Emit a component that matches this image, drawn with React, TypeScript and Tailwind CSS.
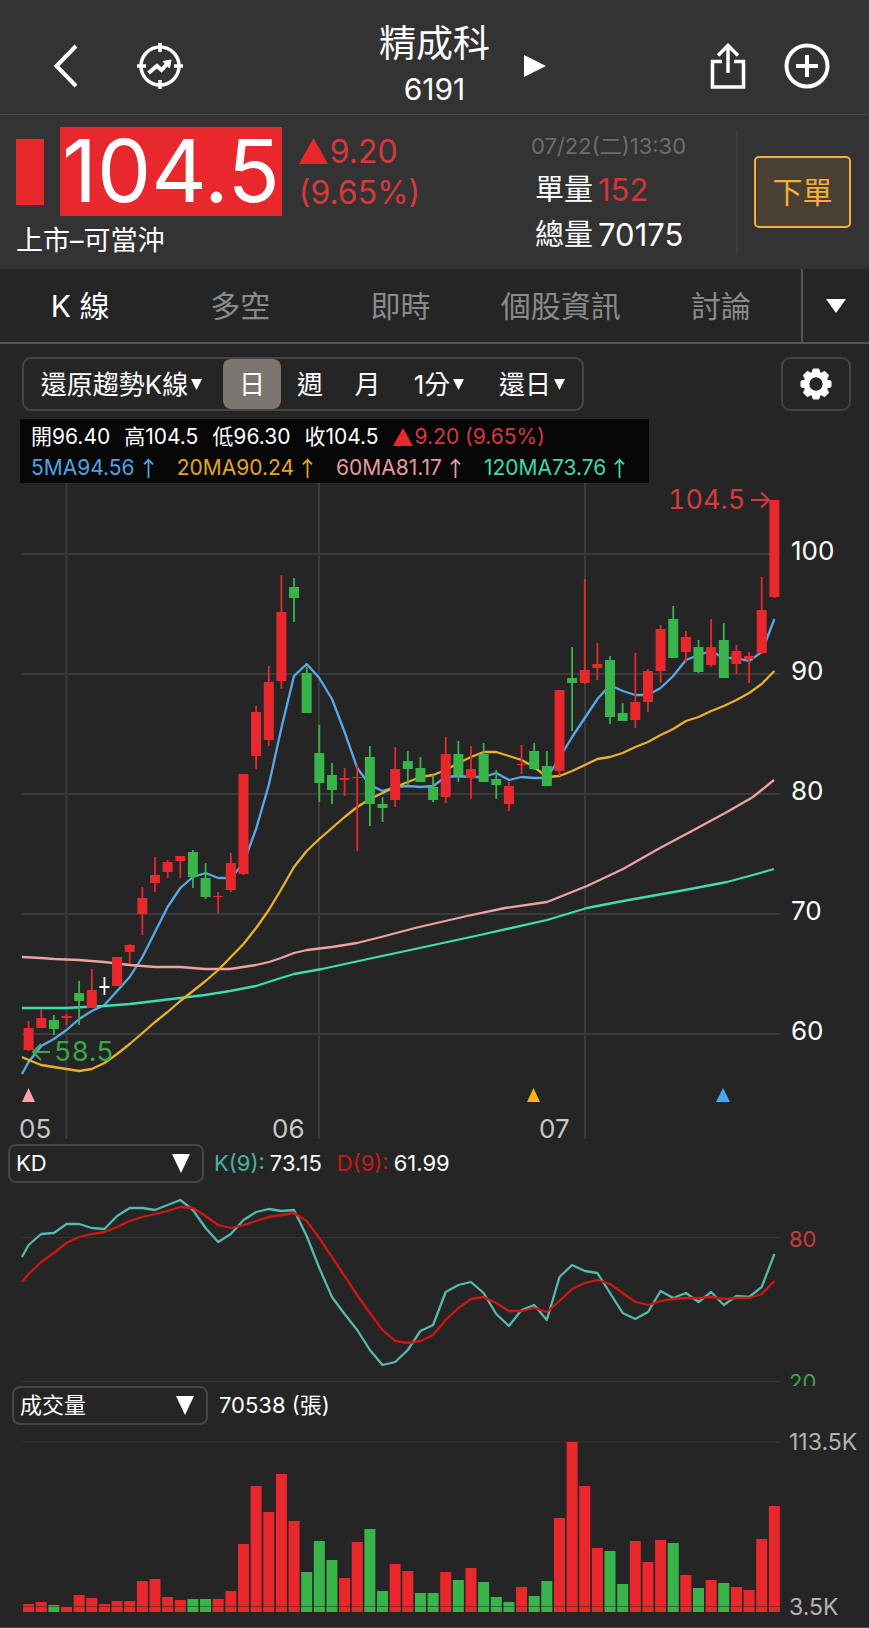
import clsx from "clsx";
import { PropsWithChildren } from "react";

type Tone = "r" | "g" | "w";
type Candle = [high: number, top: number, bottom: number, low: number, tone: Tone];

const COLORS = {
  r: "#e9282d",
  g: "#39b44a",
  w: "#ffffff",
};

// chart geometry, shared by the three panels
const LEFT = 22;
const RIGHT = 780;
const FIRST = 28.6;
const STEP = 12.64;

const CANDLES: Candle[] = [
  [1021, 1028, 1050, 1051, "r"],
  [1009, 1018, 1028, 1028, "r"],
  [1015, 1020, 1029, 1035, "g"],
  [1014, 1016, 1018, 1025, "r"],
  [981, 993, 1001, 1025, "g"],
  [969, 990, 1008, 1008, "r"],
  [977, 986, 988, 995, "w"],
  [957, 957, 986, 986, "r"],
  [944, 945, 952, 964, "r"],
  [887, 898, 914, 935, "r"],
  [857, 875, 883, 892, "r"],
  [860, 862, 872, 878, "r"],
  [856, 856, 861, 878, "r"],
  [850, 852, 877, 888, "g"],
  [863, 878, 897, 899, "g"],
  [892, 896, 897, 913, "r"],
  [853, 863, 890, 892, "r"],
  [774, 774, 874, 875, "r"],
  [706, 712, 756, 769, "r"],
  [666, 682, 740, 746, "r"],
  [575, 612, 681, 689, "r"],
  [578, 587, 598, 622, "g"],
  [667, 673, 713, 713, "g"],
  [725, 753, 783, 802, "g"],
  [763, 775, 790, 804, "g"],
  [768, 778, 780, 796, "r"],
  [765, 777, 778, 851, "r"],
  [746, 757, 804, 826, "g"],
  [797, 804, 808, 822, "g"],
  [747, 769, 800, 807, "r"],
  [751, 761, 769, 786, "g"],
  [757, 768, 782, 782, "g"],
  [775, 787, 800, 802, "g"],
  [737, 754, 797, 803, "r"],
  [741, 754, 775, 782, "g"],
  [746, 769, 778, 799, "r"],
  [743, 754, 782, 782, "g"],
  [770, 779, 785, 799, "g"],
  [782, 786, 804, 811, "r"],
  [745, 764, 765, 774, "r"],
  [743, 751, 769, 770, "g"],
  [751, 766, 786, 786, "g"],
  [690, 690, 771, 776, "r"],
  [647, 678, 683, 731, "g"],
  [579, 670, 683, 684, "r"],
  [643, 664, 668, 680, "r"],
  [656, 660, 717, 724, "g"],
  [703, 713, 721, 721, "g"],
  [653, 702, 720, 728, "r"],
  [669, 671, 702, 712, "r"],
  [625, 629, 671, 683, "r"],
  [606, 619, 658, 658, "g"],
  [631, 637, 652, 662, "r"],
  [640, 647, 672, 673, "g"],
  [619, 647, 665, 667, "r"],
  [623, 640, 678, 678, "g"],
  [645, 651, 664, 674, "r"],
  [652, 656, 659, 683, "r"],
  [577, 610, 653, 654, "r"],
  [500, 500, 597, 598, "r"],
];

// one value at the left edge, then one per candle
const MA5 = [
  1074, 1062, 1046, 1039, 1030, 1019, 1011, 1005, 991, 977, 957, 932, 907, 888, 877, 873, 878, 878, 863, 829, 785,
  728, 676, 664, 678, 699, 732, 768, 785, 791, 787, 786, 787, 786, 777, 776, 777, 777, 773, 780, 777, 778, 778, 758,
  737, 718, 699, 685, 691, 695, 695, 688, 676, 660, 655, 651, 658, 658, 661, 652, 619,
];
const MA20 = [
  1057, 1060, 1065, 1067, 1069, 1071, 1069, 1063, 1054, 1044, 1033, 1022, 1012, 1001, 991, 981, 970, 957, 944, 928,
  910, 889, 867, 851, 839, 828, 817, 807, 799, 793, 787, 782, 777, 775, 770, 763, 757, 752, 752, 756, 760, 767, 777,
  776, 771, 765, 759, 757, 753, 747, 742, 735, 729, 721, 717, 711, 706, 700, 693, 684, 671,
];
const MA60 =
  "22,957 41,958 54,959 79,960 104,962 130,965 155,967 180,967 205,969 230,969 243,967 256,965 269,962 281,958 294,953 307,950 332,947 357,943 385,936 415,928 467,916 505,908 547,902 587,886 623,869 660,848 690,832 727,812 753,797 774,780";
const MA120 =
  "22,1008 66,1008 104,1006 130,1004 155,1001 180,998 205,995 230,991 256,986 281,978 294,974 322,969 368,959 415,949 480,935 547,920 587,908 623,901 685,890 727,882 753,875 774,869";

const K_LINE = [
  1257, 1245, 1234, 1233, 1224, 1224, 1228, 1229, 1216, 1208, 1208, 1210, 1205, 1200, 1210, 1228, 1242, 1234, 1220,
  1212, 1209, 1211, 1210, 1236, 1268, 1297, 1314, 1330, 1350, 1365, 1362, 1350, 1331, 1325, 1292, 1285, 1282, 1293,
  1314, 1326, 1310, 1305, 1320, 1277, 1265, 1271, 1273, 1293, 1313, 1319, 1312, 1291, 1298, 1293, 1302, 1292, 1305,
  1296, 1297, 1287, 1254,
];
const D_LINE = [
  1282, 1274, 1262, 1253, 1243, 1237, 1234, 1232, 1227, 1221, 1217, 1214, 1211, 1207, 1208, 1216, 1225, 1228, 1225,
  1221, 1217, 1215, 1213, 1221, 1238, 1257, 1276, 1295, 1313, 1330, 1341, 1343, 1341, 1335, 1320, 1308, 1299, 1297,
  1303, 1311, 1311, 1308, 1312, 1301, 1289, 1283, 1280, 1284, 1293, 1302, 1305, 1301, 1299, 1298, 1298, 1297, 1299,
  1298, 1298, 1294, 1281,
];

const VOLUMES = [
  8, 10, 7, 5, 17, 14, 8, 11, 11, 31, 33, 15, 12, 13, 13, 13, 21, 68, 126, 100, 138, 91, 40, 71, 52, 34, 70, 83, 21,
  48, 41, 19, 19, 40, 32, 44, 30, 15, 10, 25, 16, 31, 94, 170, 126, 64, 61, 28, 71, 50, 72, 69, 37, 24, 32, 29, 25,
  22, 73, 106,
];
const VOLUME_TONES = "rrgrrrrrrrrrrggrrrrrrrgggrrggrrggrgrggg" + "rggrrrrggrrrgrgrgrrrr";

const candleX = (i: number) => FIRST + i * STEP;

const toPoints = (ys: number[]) =>
  ys.map((y, i) => `${i === 0 ? LEFT : candleX(i - 1).toFixed(1)},${y}`).join(" ");

const Triangle = ({ className, dir = "down" }: { className?: string; dir?: "down" | "up" | "right" }) => (
  <svg viewBox="0 0 20 20" preserveAspectRatio="none" className={clsx("shrink-0 fill-current", className)} aria-hidden>
    {dir === "down" && <path d="M0 0H20L10 20Z" />}
    {dir === "up" && <path d="M10 0L20 20H0Z" />}
    {dir === "right" && <path d="M0 0L20 10L0 20Z" />}
  </svg>
);

const Header = () => (
  <header className="grid grid-cols-[1fr_auto_1fr] items-center border-b border-[#4a4a4a] bg-[#333333] pt-[21px] pb-[3px]">
    <div className="flex items-center gap-[59px] pl-[53px]">
      <button type="button" aria-label="返回">
        <svg viewBox="0 0 25 44" className="h-[44px] w-[25px] fill-none stroke-white stroke-[4]">
          <path d="M23 2L3.500 22L23 42" />
        </svg>
      </button>
      <button type="button" aria-label="選股">
        <svg viewBox="0 0 46 46" className="h-[46px] w-[46px] fill-none stroke-white">
          <circle cx="23" cy="23" r="19" strokeWidth="3.500" />
          <path d="M23 0V9M23 37V46M0 23H9M37 23H46" strokeWidth="3.500" />
          <path d="M11.500 30L20 23L24.500 27L31 20" strokeWidth="4" />
          <path d="M34 17L26 18.500L32.500 25Z" className="fill-white" strokeWidth="1" />
        </svg>
      </button>
    </div>
    <div className="text-center">
      <h1 className="text-[37px] leading-[46px]">精成科</h1>
      <p className="text-[30px] leading-[44px]">6191</p>
    </div>
    <div className="flex items-center justify-between pr-[39px] pl-[34px]">
      <button type="button" aria-label="下一檔">
        <Triangle dir="right" className="h-[22px] w-[22px]" />
      </button>
      <div className="flex items-center gap-[38px]">
        <button type="button" aria-label="分享">
          <svg viewBox="0 0 36 46" className="h-[46px] w-[36px] fill-none stroke-white stroke-[3.500]">
            <path d="M12 18.500H2.500V44H33.500V18.500H24" />
            <path d="M18 30V3M8 12.500L18 2.500L28 12.500" />
          </svg>
        </button>
        <button type="button" aria-label="加入自選">
          <svg viewBox="0 0 46 46" className="h-[46px] w-[46px] fill-none stroke-white stroke-[4]">
            <circle cx="23" cy="23" r="20.500" />
            <path d="M23 12V34M12 23H34" />
          </svg>
        </button>
      </div>
    </div>
  </header>
);

const Quote = () => (
  <section className="flex justify-between bg-[#333333] pt-3 pr-[18px] pb-[10px] pl-4">
    <div>
      <div className="flex items-center">
        <span className="h-[66px] w-[28px] bg-[#e9282d]" />
        <strong className="ml-4 bg-[#e9282d] px-[2px] text-[86px] leading-[89px] font-normal">104.5</strong>
        <div className="ml-[17px] text-[32px] leading-[41px] text-[#d63a3c]">
          <p className="flex items-center">
            <Triangle dir="up" className="mr-0.5 h-[26px] w-[29px] text-[#e9282d]" />
            9.20
          </p>
          <p>(9.65%)</p>
        </div>
      </div>
      <p className="mt-[7px] text-[27px] leading-[36px]">上市–可當沖</p>
    </div>
    <div className="flex">
      <div className="w-[206px]">
        <p className="pb-0.5 pl-px text-[22px] leading-[38px] text-[#6d6d6d]">07/22(二)13:30</p>
        <p className="flex items-center gap-[5px] pl-[5px] text-[29px] leading-[45px]">
          單量<span className="text-[31px] text-[#d9333a]">152</span>
        </p>
        <p className="flex items-center gap-[5px] pl-[5px] text-[29px] leading-[45px]">
          總量<span className="text-[31px]">70175</span>
        </p>
      </div>
      <span className="my-1 w-[2px] bg-[#3d3d3d]" />
      <button
        type="button"
        className="mt-[29px] ml-4 h-[72px] w-[97px] rounded-[5px] border-2 border-[#f2ae3f] bg-[#493f33] text-[30px] text-[#f6ae3b]"
      >
        下單
      </button>
    </div>
  </section>
);

const TABS = ["K 線", "多空", "即時", "個股資訊", "討論"];

const Tabs = () => (
  <nav className="flex h-[75px] border-b-2 border-[#545454]">
    {TABS.map((tab, i) => (
      <button
        key={tab}
        type="button"
        className={clsx("flex-1 pt-0.5 text-[30px] whitespace-nowrap", i === 0 ? "text-white" : "text-[#8b8b8b]")}
      >
        {tab}
      </button>
    ))}
    <button
      type="button"
      aria-label="更多"
      className="flex w-[68px] items-center justify-center border-l-2 border-[#545454]"
    >
      <Triangle className="h-[14px] w-[20px]" />
    </button>
  </nav>
);

const PeriodButton = ({ className, children, menu }: PropsWithChildren<{ className?: string; menu?: boolean }>) => (
  <button type="button" className={clsx("flex h-full items-center justify-center whitespace-nowrap", className)}>
    {children}
    {menu && <Triangle className="ml-[3px] h-[11px] w-[11px]" />}
  </button>
);

const Toolbar = () => (
  <div className="flex items-center justify-between pt-[13px] pr-[18px] pb-2 pl-[22px]">
    <div className="flex h-[54px] items-center rounded-[9px] border-2 border-[#454545] text-[26px]">
      <PeriodButton menu className="w-[199px] pr-1">
        還原趨勢K線
      </PeriodButton>
      <PeriodButton className="my-[-2px] h-[54px] w-[58px] rounded-[8px] bg-[#7d7670]">日</PeriodButton>
      <PeriodButton className="w-[58px]">週</PeriodButton>
      <PeriodButton className="w-[57px]">月</PeriodButton>
      <PeriodButton menu className="w-[86px]">
        1分
      </PeriodButton>
      <PeriodButton menu className="w-[100px]">
        還日
      </PeriodButton>
    </div>
    <button
      type="button"
      aria-label="設定"
      className="flex h-[54px] w-[70px] items-center justify-center rounded-[9px] border-2 border-[#454545]"
    >
      <svg viewBox="0 0 32 32" className="h-[32px] w-[32px]">
        {[0, 45, 90, 135, 180, 225, 270, 315].map((angle) => (
          <path
            key={angle}
            d="M12.500 1.500Q12.800 .5 14 .5H18Q19.200 .5 19.500 1.500L20.800 6H11.200Z"
            fill="#fff"
            transform={`rotate(${angle} 16 16)`}
          />
        ))}
        <circle cx="16" cy="16" r="9.400" fill="none" stroke="#fff" strokeWidth="5.500" />
      </svg>
    </button>
  </div>
);

const UpArrow = () => (
  <svg viewBox="0 0 12 22" className="ml-2 h-[20px] w-[11px] fill-none stroke-current stroke-[2]" aria-hidden>
    <path d="M6 22V2M1 7L6 2L11 7" />
  </svg>
);

const AVERAGES = [
  { text: "5MA94.56", className: "text-[#4fa3e3]" },
  { text: "20MA90.24", className: "text-[#e2a521]" },
  { text: "60MA81.17", className: "text-[#e79a9c]" },
  { text: "120MA73.76", className: "text-[#41d9ac]" },
];

const Legend = () => (
  <div className="absolute top-0 left-[20px] w-[629px] bg-[#060606] px-[11px] text-[21px] leading-[32px] whitespace-nowrap">
    <p className="flex gap-[14px] pt-0.5">
      <span>開96.40</span>
      <span>高104.5</span>
      <span>低96.30</span>
      <span>收104.5</span>
      <span className="flex items-center text-[#d63a3c]">
        <Triangle dir="up" className="mr-0.5 h-[18px] w-[20px] text-[#e9282d]" />
        9.20 (9.65%)
      </span>
    </p>
    <p className="flex gap-[23px] leading-[30px]">
      {AVERAGES.map(({ text, className }) => (
        <span key={text} className={clsx("flex items-center", className)}>
          {text}
          <UpArrow />
        </span>
      ))}
    </p>
  </div>
);

const PriceChart = () => (
  <div className="relative">
    <Legend />
    <svg viewBox="0 419 869 725" className="block w-full" role="img" aria-label="日K線圖">
      <g stroke="#3b3b3b" strokeWidth="2">
        {[554, 674, 794, 914, 1034].map((y) => (
          <line key={y} x1={LEFT} x2={RIGHT} y1={y} y2={y} />
        ))}
        {[66.5, 319, 585].map((x) => (
          <line key={x} x1={x} x2={x} y1="445" y2="1139" />
        ))}
      </g>
      <g fill="none" strokeWidth="2.300" strokeLinejoin="round">
        <polyline points={toPoints(MA5)} stroke="#58a9ea" />
        <polyline points={MA60} stroke="#eda3a2" />
        <polyline points={MA120} stroke="#3fdcb0" />
        <polyline points={toPoints(MA20)} stroke="#e9b02c" />
      </g>
      {CANDLES.map(([high, top, bottom, low, tone], i) => (
        <g key={i} fill={COLORS[tone]}>
          <rect x={candleX(i) - 0.9} y={high} width="1.800" height={low - high} />
          <rect x={candleX(i) - 5} y={top} width="10" height={bottom - top} />
        </g>
      ))}
      <g fill="none" strokeWidth="2">
        <path d="M751 500H769M761 492.500L769 500L761 507.500" stroke="#d63a3c" />
        <path d="M50 1052H33M41 1044L33 1052L41 1060" stroke="#39a845" />
      </g>
      <g className="text-[27px] tabular-nums">
        <text x="668" y="509" fill="#d63a3c">
          104.5
        </text>
        <text x="54" y="1061" fill="#39a845">
          58.5
        </text>
      </g>
      <path d="M28.500 1088L35 1102H22Z" fill="#f8a5a3" />
      <path d="M533.500 1088L540 1102H527Z" fill="#f9b316" />
      <path d="M723 1088L730 1102H716Z" fill="#4ba5f5" />
      <g fill="#ffffff" className="text-[26px]">
        {[100, 90, 80, 70, 60].map((price, i) => (
          <text key={price} x="791" y={560 + i * 120}>
            {price}
          </text>
        ))}
      </g>
      <g fill="#c9c9c9" className="text-[26px]">
        <text x="19" y="1138">
          05
        </text>
        <text x="272" y="1138">
          06
        </text>
        <text x="539" y="1138">
          07
        </text>
      </g>
    </svg>
  </div>
);

type IndicatorSelectProps = {
  label: string;
  value: string;
  options: string[];
};

const IndicatorSelect = ({ label, value, options }: IndicatorSelectProps) => (
  <label className="relative block w-[196px]">
    <span className="sr-only">{label}</span>
    <select
      defaultValue={value}
      className="block h-[39px] w-full appearance-none rounded-[8px] border-2 border-[#454545] bg-[#252525] py-0 pl-1.5 text-[22px] leading-[35px]"
    >
      {options.map((option) => (
        <option key={option}>{option}</option>
      ))}
    </select>
    <Triangle className="pointer-events-none absolute top-[10px] right-[14px] h-[19px] w-[18px]" />
  </label>
);

const KdPanel = () => (
  <section>
    <div className="flex items-center pl-2 text-[22px]">
      <IndicatorSelect label="技術指標" value="KD" options={["KD", "MACD", "RSI"]} />
      <p className="ml-[10px] flex gap-[5px]">
        <span className="text-[#45b3a3]">K(9):</span>
        <span>73.15</span>
        <span className="ml-2.5 text-[#cc1815]">D(9):</span>
        <span>61.99</span>
      </p>
    </div>
    <svg viewBox="0 1183 869 203" className="block w-full" role="img" aria-label="KD">
      <path d={`M${LEFT} 1237.500H${RIGHT}M${LEFT} 1381.500H${RIGHT}`} stroke="#343434" />
      <g fill="none" strokeWidth="2.300" strokeLinejoin="round">
        <polyline points={toPoints(K_LINE)} stroke="#56b9ad" />
        <polyline points={toPoints(D_LINE)} stroke="#cf1714" />
      </g>
      <g className="text-[22px]">
        <text x="789" y="1247" fill="#c63b3d">
          80
        </text>
        <text x="789" y="1390" fill="#39a845">
          20
        </text>
      </g>
    </svg>
  </section>
);

const VolumePanel = () => (
  <section className="border-b border-[#4a4a4a]">
    <div className="flex items-center pl-3 text-[22px]">
      <IndicatorSelect label="副圖指標" value="成交量" options={["成交量", "法人", "融資"]} />
      <p className="ml-[11px]">70538 (張)</p>
    </div>
    <svg viewBox="0 1425 869 202" className="block w-full" role="img" aria-label="成交量">
      <path d={`M${LEFT} 1442H${RIGHT}`} stroke="#343434" />
      {VOLUMES.map((height, i) => (
        <rect
          key={i}
          x={candleX(i) - 5.5}
          y={1612 - height}
          width="11"
          height={height}
          fill={COLORS[VOLUME_TONES[i] as Tone]}
        />
      ))}
      <path d={`M${LEFT} 1606.500H${RIGHT}`} stroke="#252525" strokeOpacity="0.5" />
      <g fill="#b4b4b4" className="text-[23px]">
        <text x="789" y="1450">
          113.5K
        </text>
        <text x="789" y="1615">
          3.5K
        </text>
      </g>
    </svg>
  </section>
);

const App = () => (
  <main className="min-h-screen bg-[#252525] font-['Inter','Noto_Sans_CJK_TC',sans-serif] text-white">
    <Header />
    <Quote />
    <Tabs />
    <Toolbar />
    <PriceChart />
    <KdPanel />
    <VolumePanel />
  </main>
);

export default App;
